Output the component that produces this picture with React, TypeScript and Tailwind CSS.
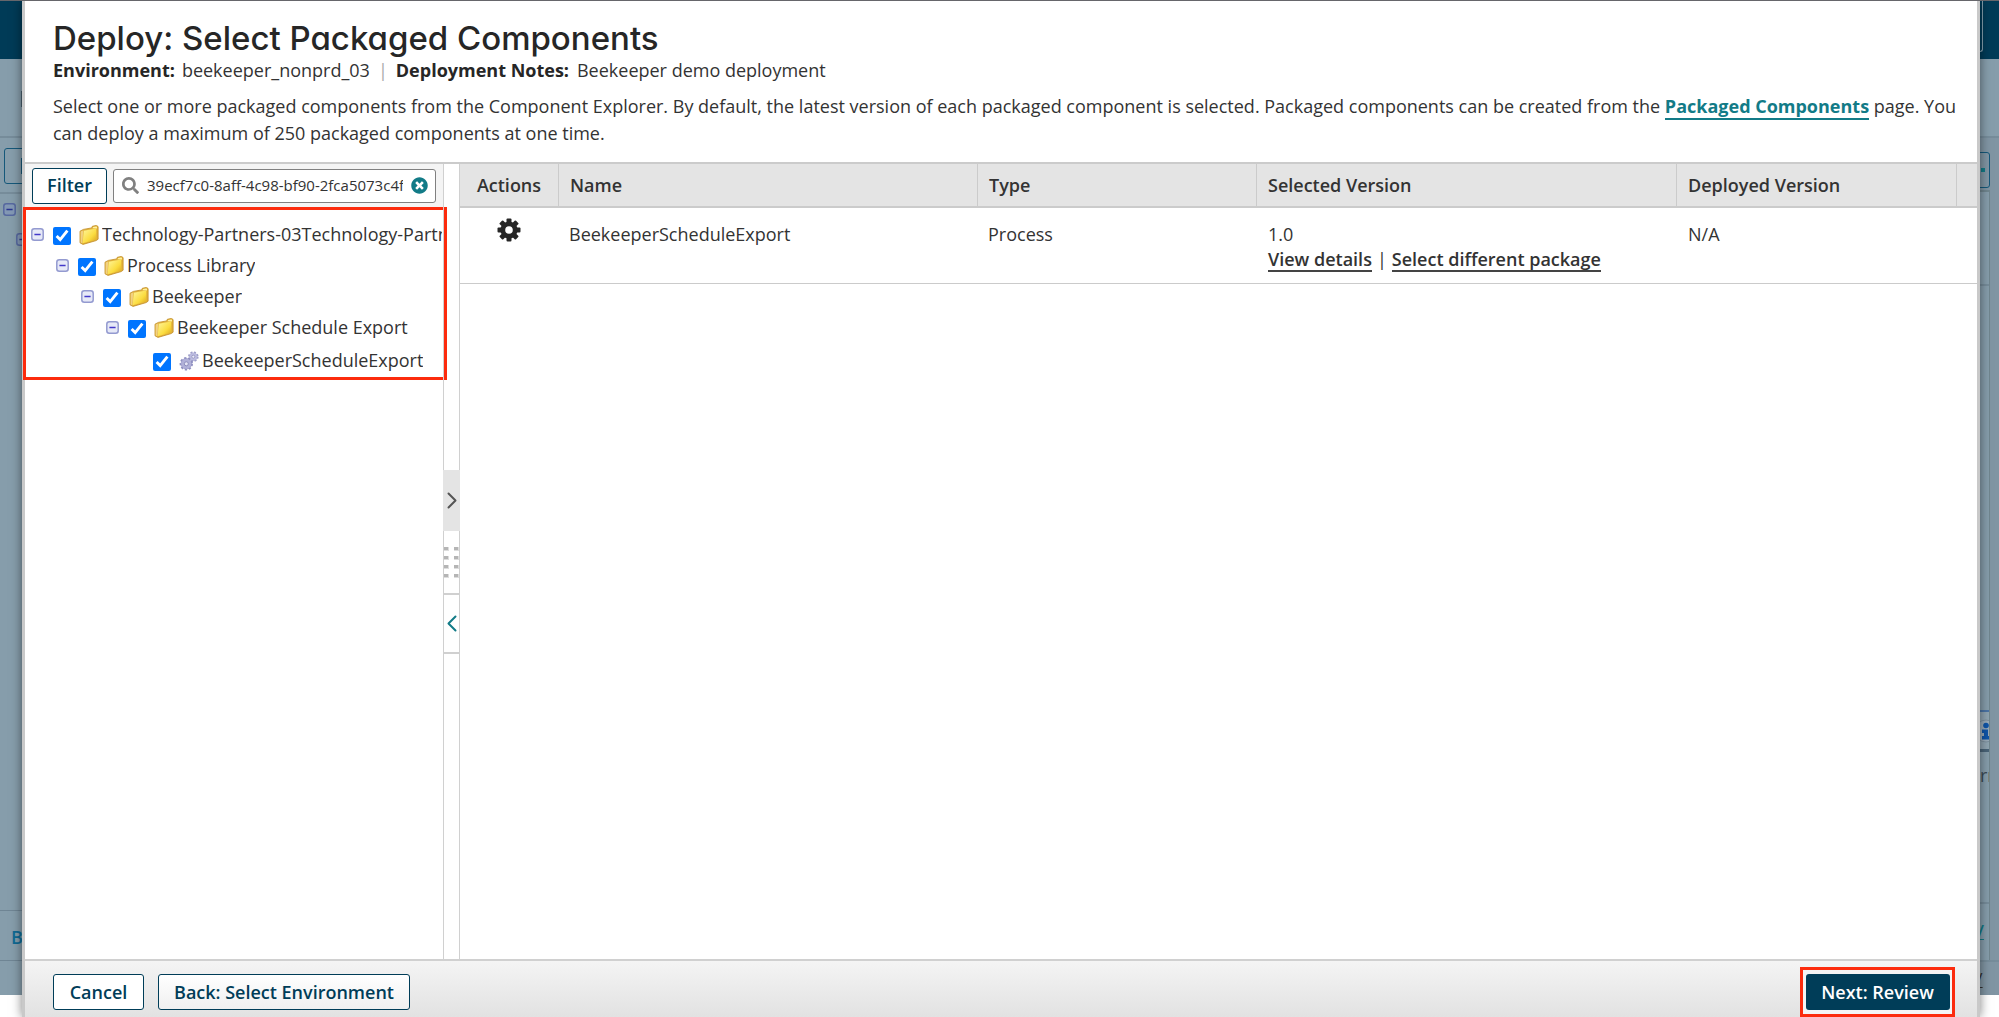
import { FaSearch, FaTimesCircle } from "react-icons/fa";

interface TreeNode {
  label: string;
  kind: "folder" | "process";
  indent: string;
}

interface PackageRow {
  name: string;
  type: string;
  selectedVersion: string;
  deployedVersion: string;
}

const TREE: TreeNode[] = [
  { label: "Technology-Partners-03Technology-Partners-03", kind: "folder", indent: "pl-[5px]" },
  { label: "Process Library", kind: "folder", indent: "pl-[30px]" },
  { label: "Beekeeper", kind: "folder", indent: "pl-[55px]" },
  { label: "Beekeeper Schedule Export", kind: "folder", indent: "pl-[80px]" },
  { label: "BeekeeperScheduleExport", kind: "process", indent: "pl-[105px]" },
];

const PACKAGES: PackageRow[] = [
  { name: "BeekeeperScheduleExport", type: "Process", selectedVersion: "1.0", deployedVersion: "N/A" },
];

export default function App() {
  return (
    <div className="relative min-h-screen overflow-hidden border-t border-[#66666b] bg-white font-['Open_Sans','Noto_Sans',sans-serif] text-[18px] text-[#333]">
      <Backdrop />
      <main className="relative mr-[19px] ml-[22px] flex min-h-[calc(100vh-1px)] flex-col border-x-[3px] border-[#c9c9c9] bg-white shadow-[0_0_10px_rgba(0,0,0,0.5)]">
        <Header />
        <div className="flex flex-1 border-t-2 border-[#cbcbcb]">
          <Explorer />
          <Splitter />
          <Packages />
        </div>
        <Footer />
      </main>
    </div>
  );
}

function Header() {
  return (
    <header className="h-[161px] px-7 pt-[18px]">
      <h1 className="font-['Inter',sans-serif] text-[33px] leading-[38px] font-medium text-[#262626] [font-feature-settings:'cv11']">
        Deploy: Select Packaged Components
      </h1>
      <div className="flex leading-[26px]">
        <strong className="mr-[7px] font-bold text-[#262626]">Environment:</strong>
        beekeeper_nonprd_03
        <span className="mx-2 text-[#aaa]">|</span>
        <strong className="mr-2 font-bold text-[#262626]">Deployment Notes:</strong>
        Beekeeper demo deployment
      </div>
      <p className="-mr-6 mt-[10px] leading-[27px]">
        Select one or more packaged components from the Component Explorer. By default, the latest version of each
        packaged component is selected. Packaged components can be created from the{" "}
        <a href="#packaged-components" className="border-b-2 border-[#127b87] font-bold text-[#127b87]">
          Packaged Components
        </a>{" "}
        page. You can deploy a maximum of 250 packaged components at one time.
      </p>
    </header>
  );
}

function Explorer() {
  return (
    <aside className="w-[418px] shrink-0">
      <div className="flex h-[43px] items-center gap-[6px] bg-[#f4f4f4] pl-[7px] pr-[7px]">
        <button
          type="button"
          className="h-9 w-[75px] shrink-0 rounded-[3px] border border-[#003d58] bg-white font-semibold text-[#003d58]"
        >
          Filter
        </button>
        <div className="flex h-[34px] min-w-0 flex-1 items-center rounded-[3px] border border-[#808080] bg-white pr-[7px] pl-2">
          <FaSearch className="size-[17px] shrink-0 text-[#808080]" />
          <input
            type="text"
            aria-label="Filter components"
            defaultValue="39ecf7c0-8aff-4c98-bf90-2fca5073c4f1"
            className="mr-2 ml-2 w-0 min-w-0 flex-1 text-[15px] outline-none"
          />
          <FaTimesCircle className="size-[17px] shrink-0 text-[#127b87]" />
        </div>
      </div>
      <ul className="-mr-[4px] -ml-[2px] h-[173px] overflow-hidden border-[3px] border-[#fc2b0d] pt-[9px] pr-[2px]">
        {TREE.map((node) => (
          <TreeRow key={node.label} node={node} />
        ))}
      </ul>
    </aside>
  );
}

function TreeRow({ node }: { node: TreeNode }) {
  return (
    <li className={`flex h-[31px] items-center last:mt-[2px] ${node.indent}`}>
      {node.kind === "folder" ? <Toggle /> : <span className="w-[13px] shrink-0" />}
      <label className="ml-[9px] flex min-w-0 items-center">
        <input type="checkbox" defaultChecked className="mt-[2px] size-[18px] shrink-0 accent-[#0075ff]" />
        {node.kind === "folder" ? <FolderIcon /> : <GearsIcon />}
        <span className="ml-[3px] overflow-hidden whitespace-nowrap">{node.label}</span>
      </label>
    </li>
  );
}

function Splitter() {
  return (
    <div className="flex w-[17px] shrink-0 flex-col border-x border-[#d0d0d0] pt-[306px]">
      <button
        type="button"
        aria-label="Expand explorer"
        className="-mx-px flex h-[61px] items-center justify-center bg-[#e4e4e4] text-[#555]"
      >
        <Chevron path="M1.5 1.5l7 7-7 7" />
      </button>
      <div className="flex h-[62px] items-center justify-center">
        <div className="grid grid-cols-2 gap-x-[5px] gap-y-[5px]">
          {Array.from({ length: 8 }, (_, i) => (
            <span key={i} className="h-1 w-[5px] border-r border-b border-[#ddd] bg-[#b5b5b5]" />
          ))}
        </div>
      </div>
      <button
        type="button"
        aria-label="Collapse explorer"
        className="flex h-[61px] items-center justify-center border-y-2 border-[#d0d0d0] text-[#127b87]"
      >
        <Chevron path="M8.5 1.5l-7 7 7 7" />
      </button>
    </div>
  );
}

function Packages() {
  return (
    <section className="min-w-0 flex-1">
      <table className="w-full table-fixed border-separate border-spacing-0 text-left">
        <colgroup>
          <col className="w-[98px]" />
          <col />
          <col className="w-[279px]" />
          <col className="w-[420px]" />
          <col className="w-[280px]" />
          <col className="w-[21px]" />
        </colgroup>
        <thead>
          <tr className="h-11 bg-[#e4e4e4]">
            <th className="border-b-2 border-[#cbcbcb] text-center font-semibold">Actions</th>
            <th className="border-b-2 border-l border-[#cbcbcb] px-[11px] font-semibold">Name</th>
            <th className="border-b-2 border-l border-[#cbcbcb] px-[11px] font-semibold">Type</th>
            <th className="border-b-2 border-l border-[#cbcbcb] px-[11px] font-semibold">Selected Version</th>
            <th className="border-b-2 border-l border-[#cbcbcb] px-[11px] font-semibold">Deployed Version</th>
            <th className="border-b-2 border-l border-[#cbcbcb]" />
          </tr>
        </thead>
        <tbody>
          {PACKAGES.map((row) => (
            <tr key={row.name} className="h-[76px] align-top leading-[25px]">
              <td className="border-b border-[#cbcbcb] pt-[10px] text-center">
                <button type="button" aria-label="Actions">
                  <GearIcon />
                </button>
              </td>
              <td className="border-b border-[#cbcbcb] px-[11px] pt-[14px]">{row.name}</td>
              <td className="border-b border-[#cbcbcb] px-[11px] pt-[14px]">{row.type}</td>
              <td className="border-b border-[#cbcbcb] px-3 pt-[14px]">
                {row.selectedVersion}
                <div className="flex gap-[5px] whitespace-nowrap">
                  <a href="#details" className="h-[25px] border-b-2 border-[#444] font-semibold">
                    View details
                  </a>
                  |
                  <a href="#packages" className="h-[25px] border-b-2 border-[#444] font-semibold">
                    Select different package
                  </a>
                </div>
              </td>
              <td className="border-b border-[#cbcbcb] px-3 pt-[14px]">{row.deployedVersion}</td>
              <td className="border-b border-[#cbcbcb]" />
            </tr>
          ))}
        </tbody>
      </table>
    </section>
  );
}

function Footer() {
  return (
    <footer className="flex h-[58px] items-start border-t-2 border-[#d0d0d0] bg-linear-to-b from-[#f4f4f4] to-[#e2e2e2] pl-7">
      <button
        type="button"
        className="mt-[13px] h-9 w-[91px] rounded-[3px] border border-[#003d58] bg-white font-semibold text-[#003d58]"
      >
        Cancel
      </button>
      <button
        type="button"
        className="mt-[13px] ml-[14px] h-9 w-[252px] rounded-[3px] border border-[#003d58] bg-linear-to-b from-white to-[#f0f0f0] font-semibold text-[#003d58]"
      >
        Back: Select Environment
      </button>
      <div className="mt-[6px] mr-[22px] ml-auto flex h-[50px] w-[155px] items-center justify-center border-[3px] border-[#fc2b0d] bg-[#f4f4f4]">
        <button type="button" className="h-9 w-[144px] rounded-[3px] bg-[#003d58] font-semibold text-white">
          Next: Review
        </button>
      </div>
    </footer>
  );
}

// Dimmed page that shows on both sides of the dialog
function Backdrop() {
  return (
    <div className="absolute inset-x-0 top-0 bottom-[22px] flex flex-col overflow-hidden bg-[#869dab]" aria-hidden="true">
      <div className="flex h-[58px] shrink-0 justify-end bg-[#003b57]">
        <div className="mr-4 h-[51px] w-20 rounded-br-[3px] border-r border-b border-[#86a3b2]" />
      </div>
      <div className="h-[79px] shrink-0 border-b-2 border-[#768c9a] pt-8 pl-[21px]">
        <div className="h-4 w-px bg-[#4a5f6e]" />
      </div>
      <div className="flex flex-1 justify-between">
        <div className="flex w-16 flex-col pt-[10px]">
          <div className="ml-1 h-9 rounded-[3px] border border-[#15587a] pt-[9px] pl-4">
            <div className="h-4 w-[2px] bg-[#15587a]" />
          </div>
          <div className="mt-[8px] border-t-2 border-[#768c9a] pt-[9px] pl-[3px]">
            <Toggle dimmed />
          </div>
          <div className="mt-[17px] pl-4">
            <Toggle dimmed />
          </div>
          <div className="mt-auto h-[51px] border-y border-[#6f8594] pt-[13px] pl-[11px] font-semibold text-[#0f6a94]">
            B
          </div>
          <div className="h-[34px]" />
        </div>
        <div className="flex w-16 flex-col bg-[#8095a3] pt-[14px]">
          <div className="mr-[9px] flex h-9 items-center rounded-[3px] border border-[#15587a] pl-[45px]">
            <div className="size-1 bg-[#127b87]" />
          </div>
          <div className="mt-[2px] mr-[9px] flex flex-1 flex-col border-t-2 border-r border-[#70868f] bg-[#869dab]">
            <div className="h-[94px] border-b-2 border-[#768c9a]" />
            <div className="mt-[424px] h-[42px] overflow-hidden border-t-2 border-b-[3px] border-t-[#4b74a5] border-b-[#4a6478] bg-[#8fa4b1] pl-[39px]">
              <InfoIcon />
            </div>
            <div className="mt-[10px] overflow-hidden pl-[45px] text-[#3a4a55]">rr</div>
            <div className="mt-auto h-[58px] border-t-2 border-[#768c9a] pt-[14px] pl-[42px] font-semibold text-[#127b87] underline">
              /
            </div>
          </div>
          <div className="h-[35px] border-t-2 border-[#768c9a] pt-1 pl-[41px] text-[#333] underline">/</div>
        </div>
      </div>
    </div>
  );
}

function Chevron({ path }: { path: string }) {
  return (
    <svg viewBox="0 0 10 17" fill="none" stroke="currentColor" strokeWidth="2" className="h-[17px] w-[10px] shrink-0">
      <path d={path} strokeLinecap="round" strokeLinejoin="round" />
    </svg>
  );
}

function Toggle({ dimmed = false }: { dimmed?: boolean }) {
  return (
    <svg viewBox="0 0 13 13" className="size-[13px] shrink-0">
      <rect
        x="0.8"
        y="0.8"
        width="11.4"
        height="11.4"
        rx="2.5"
        fill={dimmed ? "#8398b4" : "#e6e9f7"}
        stroke={dimmed ? "#56689f" : "#939ad0"}
        strokeWidth="1.5"
      />
      <path d="M3.4 6.5h6.2" stroke={dimmed ? "#2b3590" : "#4338c9"} strokeWidth="1.5" />
    </svg>
  );
}

function FolderIcon() {
  return (
    <svg viewBox="0 0 20 20" className="ml-2 size-5 shrink-0">
      <defs>
        <linearGradient id="folder-front" x1="0" y1="0" x2="1" y2="1">
          <stop offset="0" stopColor="#fff7a0" />
          <stop offset="0.6" stopColor="#fbdc3f" />
          <stop offset="1" stopColor="#d9a11c" />
        </linearGradient>
      </defs>
      <path
        d="M1 6.2l3.4-1.8 8.3-1.5.6-1.6 4.2-.9 1.6 1.2v12.6l-2 1.4L4 19.4l-3-1.6z"
        fill="#e3b43c"
        stroke="#c08a22"
        strokeWidth="0.8"
        strokeLinejoin="round"
      />
      <path d="M13.6 3.2l.5-1.2 3-.6.9.7v1.4z" fill="#fff0a0" />
      <path d="M4.8 5.8l12.4-2.2v11L3.6 18.2z" fill="url(#folder-front)" />
      <path d="M1.6 6.6l2.6-1.2-.9 12.8-1.7-.8z" fill="#f1d183" />
    </svg>
  );
}

function GearsIcon() {
  return (
    <svg viewBox="0 0 20 20" className="ml-2 size-5 shrink-0">
      <circle cx="14.3" cy="5.7" r="4.3" fill="#b9b9dc" stroke="#9f9fca" strokeWidth="2" strokeDasharray="1.9 1.5" />
      <circle cx="14.3" cy="5.7" r="3.6" fill="#bcbce0" />
      <circle cx="14.3" cy="5.7" r="1.5" fill="#ececf8" stroke="#8888b8" strokeWidth="0.7" />
      <circle cx="7.3" cy="12.8" r="5.7" fill="#a9a9d2" stroke="#8f8fc0" strokeWidth="2" strokeDasharray="2.2 1.8" />
      <circle cx="7.3" cy="12.8" r="5" fill="#b0b0d8" />
      <circle cx="7.3" cy="12.8" r="2" fill="#e4e4f4" stroke="#8080b2" strokeWidth="0.8" />
    </svg>
  );
}

function GearIcon() {
  return (
    <svg viewBox="0 0 24 24" className="size-6">
      <g fill="#262626">
        <rect x="9.5" y="0.5" width="5" height="23" rx="1" />
        <rect x="9.5" y="0.5" width="5" height="23" rx="1" transform="rotate(45 12 12)" />
        <rect x="9.5" y="0.5" width="5" height="23" rx="1" transform="rotate(90 12 12)" />
        <rect x="9.5" y="0.5" width="5" height="23" rx="1" transform="rotate(135 12 12)" />
        <circle cx="12" cy="12" r="8.6" />
      </g>
      <circle cx="12" cy="12" r="3.8" fill="#fff" />
    </svg>
  );
}

function InfoIcon() {
  return (
    <svg viewBox="0 0 24 24" className="mt-[7px] size-6">
      <circle cx="12" cy="12" r="11" fill="#9aabb8" stroke="#7d909e" />
      <circle cx="12" cy="6.500" r="2.8" fill="#0f55a8" />
      <path d="M8 10.500h6V17h2v3.500H8V17h2v-3H8z" fill="#0f55a8" />
    </svg>
  );
}
